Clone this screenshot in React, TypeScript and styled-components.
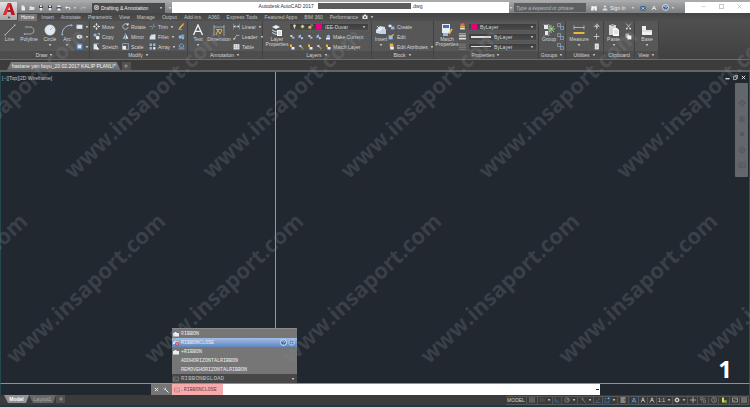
import React from "react";
import styled, { createGlobalStyle } from "styled-components";

const GlobalStyle = createGlobalStyle`
  *, *::before, *::after { box-sizing: border-box; }
  html, body { margin: 0; height: 100%; background: #212830; }
  #root { height: 100%; }
  button, input, select { font: inherit; color: inherit; margin: 0; padding: 0; border: 0; background: none; }
  select { appearance: none; }
`;

/* ---------- icons ---------- */

const W = "#e9eef4";
const B = "#8fb8ea";
const Y = "#e8b83a";
const P = "#e5007d";
const line = (d: string, c = W, w = 1.2) => <path d={d} fill="none" stroke={c} strokeWidth={w} />;
const fill = (d: string, c = W) => <path d={d} fill={c} />;

const drawings: Record<string, React.ReactNode> = {
  file: <>{fill("M3 1h5l2 2v8H3z")}{line("M8 1v3h3", "#888", 0.7)}</>,
  open: <>{fill("M1 3h4l1 1h4v2H1z")}{fill("M0 10l2-5h10l-2 5z", "#d8dde2")}</>,
  save: <>{fill("M2 1h8v10H2z", "#40454b")}{fill("M4 1h4v3H4zM3 6h6v5H3z")}</>,
  print: <>{fill("M3 1h6v3H3z")}{fill("M1 4h10v5H1z", "#565b61")}{fill("M3 7h6v4H3z")}</>,
  undo: <>{line("M3 5h5c3 0 3 4 0 4", W, 1.8)}{fill("M0 5l4-3v6z")}</>,
  redo: <>{line("M9 5H4c-3 0-3 4 0 4", "#b5b9bd", 1.5)}{fill("M12 5L8 2v6z", "#b5b9bd")}</>,
  cube: <>{line("M2 2h8v8H2z", "#fff", 2)}{fill("M5 5h2v2H5z", "#fff")}</>,
  binoculars: <>{fill("M1 2h4v9H0zM7 2h4l1 9H7zM4 4h4v3H4z", "#f5f5f5")}</>,
  person: <><circle cx="6" cy="3" r="2" fill="#eee" />{fill("M1 11c0-6 10-6 10 0z", "#ddd")}</>,
  exchange: <>{fill("M1 2h10v9H1z", "#31598f")}{line("M3 4l6 5M9 4L3 9", "#fff", 1.4)}</>,
  a360: <>{line("M2 10l4-8 4 8M4 7h4", "#e8f0fa", 1.6)}</>,
  help: <><circle cx="6" cy="6" r="5" fill="#33639c" stroke="#fff" strokeWidth="1.4" />{line("M4 5c0-3 4-2 4 0L6 7M6 8v1.4", "#fff", 1.1)}</>,
  line: <>{line("M1 11L11 1", "#d6dde6", 0.7)}<circle cx="1.2" cy="10.8" r=".9" fill={B} /><circle cx="10.8" cy="1.2" r=".9" fill={B} /></>,
  polyline: <>{line("M1 10h6c5 0 5-6 1-7H2", "#b9cde8", 0.7)}<circle cx="1.5" cy="10" r=".8" fill={B} /></>,
  circle: <><circle cx="6" cy="6" r="5.3" fill="#e2e8ef" stroke="#a7b3c2" strokeWidth=".5" />{line("M6 6l3-3", "#6f8fb8", 0.5)}</>,
  arc: <>{line("M1 11C1 5 5 1 11 1", "#b9cde8", 0.8)}<circle cx="1.4" cy="10.6" r=".9" fill={B} /><circle cx="10.6" cy="1.4" r=".9" fill={B} /></>,
  rect: <>{fill("M1 3h10v7H1z", "#dfe8f2")}{fill("M1 3h3v2H1z", B)}</>,
  ellipse: <><ellipse cx="6" cy="6.5" rx="5" ry="3.4" fill="#dfe8f2" /><circle cx="6" cy="6.5" r="1.2" fill="#5b7fae" /></>,
  hatch: <>{fill("M1 1h10v10H1z", "#5f8fd0")}{fill("M3 3h6v6H3z", "#dbe8f8")}</>,
  move: <>{line("M6 1v10M1 6h10", W, 1.2)}{fill("M6 0l2 3H4zM6 12l2-3H4zM0 6l3-2v4zM12 6L9 4v4z")}<circle cx="6" cy="6" r="1.4" fill="#505050" /></>,
  copy: <><circle cx="3.5" cy="3.5" r="2.7" fill={B} /><circle cx="8" cy="8" r="3.2" fill={W} />{line("M8 1h3v3", W)}</>,
  stretch: <>{fill("M1 2h6v9H1z", "#dfe6ee")}{fill("M7 6l4 5H6z", "#fff")}{line("M1 1h9", B, 1)}</>,
  rotate: <>{line("M9 2.5A4.6 4.6 0 1 0 10.6 7", "#d9e0e8", 1.2)}{fill("M7 1l5 0-2 4z")}</>,
  mirror: <>{fill("M1 10l4-8v8z", B)}{fill("M11 10L7 2v8z")}{line("M6 0v12", W, 0.6)}</>,
  scale: <>{line("M1 1h10v10H1z", B, 1.2)}{fill("M1 5h6v6H1z")}</>,
  trim: <>{line("M1 6h4M8 6h3", B, 1)}{line("M9 1L5 11", "#a0a8b1", 0.9)}</>,
  fillet: <>{fill("M1 11C1 5 5 2 11 2v9z", "#d7e2ef")}{line("M1 7l4-5", W, 1)}</>,
  array: <>{fill("M1 1h4v4H1zM7 1h4v4H7zM1 7h4v4H1z", B)}{fill("M7 7h4v4H7z")}</>,
  erase: <>{line("M2 10l7-8", Y, 2.4)}{line("M8 3l2-2", "#e87f6b", 2.4)}{line("M1 11h6", W, 0.8)}</>,
  explode: <><circle cx="4" cy="7" r="3" fill={B} /><circle cx="8" cy="5" r="3" fill="#6ca2e2" /><circle cx="8.5" cy="9" r="2" fill={B} /></>,
  offset: <>{line("M1 10h10M2 7c0-7 8-7 8 0z", B, 1.3)}</>,
  text: <>{line("M1.5 11L6 1l4.5 10M3.3 7.4h5.4", "#f0f3f6", 1.3)}</>,
  dimension: <>{line("M1 1v11M11 1v11M1 3h10", "#bcd3ef", 0.6)}{line("M3 11l2-5 2 4 2-4", Y, 1)}{fill("M3 5h6v1H3z", "#c9a95b")}</>,
  linear: <>{line("M1 1v10M11 1v10M1 6h10", B, 0.9)}{fill("M1 6l3-2v4zM11 6L8 4v4z")}</>,
  leader: <>{line("M2 11L6 4h5", "#d6dee8", 1)}{fill("M1 12l0-4 3 2z")}</>,
  table: <>{fill("M1 2h10v9H1z", "#f0f2f4")}{line("M1 5h10M1 8h10M4.5 2v9M8 2v9", "#7a828b", 0.6)}</>,
  layers: <>{fill("M1 3l4-2 4 2-4 2z")}{fill("M1 5.5l4 2 4-2v1l-4 2-4-2zM1 8l4 2 1-.5v1L5 11 1 9z", "#cdd6e0")}{fill("M6 6h5v6H6z", "#f8f8f8")}{line("M7 8h3M7 10h3", "#7b8591", 0.5)}</>,
  bulb: <><circle cx="6" cy="4" r="3" fill="#f6ecb2" />{fill("M4.5 7h3v4h-3z", "#d5d5d5")}</>,
  sun: <><circle cx="6" cy="6" r="3" fill="#f4e9a4" />{line("M6 0v12M0 6h12M2 2l8 8M10 2l-8 8", "#d6cc90", 0.7)}</>,
  lock: <>{fill("M1 5h7v6H1z", "#e7c26b")}{line("M7 5V2h4v3", W, 1)}</>,
  layerA: <>{fill("M1 4l4-2 3 2-3 2z")}{fill("M5 7l4-2 3 3-4 2z", B)}</>,
  layerB: <>{fill("M1 3l5-2v6l-5 1z", B)}{fill("M6 6l5 2-4 3z")}</>,
  layerC: <>{fill("M1 4l4-2 3 2-3 2z")}{line("M6 7c4-1 5 2 3 4", Y, 1.5)}</>,
  layerD: <>{fill("M2 1h4v5H2z", Y)}{fill("M5 6h6v5H5z")}</>,
  layerE: <>{fill("M3 4l4-3 3 3v4H3z", B)}{fill("M2 8h8v3H2z")}</>,
  insert: <>{fill("M1 6l4-4 5 1v5l-4 2-5-1z", "#d6dde6")}{fill("M5 5h6v5H5z", "#bcd2ee")}{line("M2 2l4 4M6 3v3H3", "#fff", 0.8)}</>,
  create: <>{fill("M1 3h5v4H1z")}{fill("M5 6h6v5H5z", B)}</>,
  edit: <>{fill("M1 4h7v7H1z", B)}{line("M4 8l6-6", Y, 1.8)}</>,
  attributes: <>{fill("M3 1h6v5H3z", Y)}{fill("M3 6h7v5H4z")}</>,
  match: <>{fill("M1 0h8v9H1z", "#e9edf2")}{fill("M2 1h6v3H2z", "#3e73b9")}{fill("M2 9h5v3H2z", B)}{line("M8 10l3-5", Y, 1.6)}</>,
  wheel: <><ellipse cx="6" cy="3" rx="4" ry="2.4" fill="#d66" />{fill("M2 5h8v2H2z", Y)}{fill("M2 8h8v3H2z", W)}</>,
  weights: <>{fill("M0 1h12v1H0zM0 4h12v2H0zM0 8h12v3H0z", "#e2e2e2")}</>,
  linetypes: <>{line("M0 2h12M0 5h12M0 8h12M0 11h12", "#aaa", 0.7)}</>,
  group: <>{fill("M1 1h4v4H1zM2 7h3v4H2z", "#e3e9f0")}{line("M8 1v8M5 5h7M6 2l5 6M11 2L6 8", "#9fe08c", 0.8)}{line("M0 0h6v12H0", "#cfd8e3", 0.5)}</>,
  ungroup: <>{line("M1 1h5v5H1zM6 6h5v5H6z", "#9fc0e6", 1)}</>,
  measure: <>{line("M1 3.5h10M1 1.5v4M11 1.5v4", "#dce6f1", 0.6)}{fill("M.5 8h11v2H.5z", Y)}</>,
  quick: <>{line("M6 1v10M1 6h10M3 3l6 6", W, 0.9)}{fill("M7 1l4 4-2 1-3-3z", "#d8b35f")}</>,
  point: <>{line("M6 1v10M1 6h10", W, 1.1)}</>,
  calc: <>{fill("M3 1h7v10H3z", "#e9ebee")}{line("M4 4h5M4 7h5M6 4v6", "#909aa5", 0.6)}</>,
  paste: <>{fill("M1 1h7v10H1z", "#cfd4d9")}{fill("M3 0h3v2H3z", "#8f979f")}{fill("M5 4h4l2 2v6H5z", "#fafafa")}{line("M6 7h4M6 9h4", "#8c949c", 0.5)}</>,
  cut: <>{line("M2 1l6 7M10 1L4 8", W, 1)}<circle cx="3" cy="9.5" r="1.5" fill={W} /><circle cx="9" cy="9.5" r="1.5" fill={W} /></>,
  pages: <>{fill("M1 1h6v7H1z", "#b9c0c8")}{fill("M4 4h7v7H4z", "#f3f5f7")}</>,
  base: <>{fill("M1 2h4v4h6v5H1z", "#eef1f4")}{line("M1 7h10", "#aab2ba", 0.5)}</>,
  camera: <>{fill("M1 3h10v7H1zM4 1h4v2H4z", "#e5e5e5")}<circle cx="6" cy="6.5" r="2" fill="#555" /></>,
  wrench: <>{line("M4 4l7 7", "#eee", 2)}{line("M1 3l2 2 2-2-1-2", "#eee", 1.6)}</>,
  cross: <>{line("M2 2l8 8M10 2l-8 8", "#fff", 2)}</>,
  prompt: <>{line("M1 2h10v8H1zM3 4l2 2-2 2M6 8h3", "#b56a70", 1)}</>,
  history: <>{line("M1 2h10v8H1zM3 4l2 2-2 2M6 8h3", "#9a9a9a", 1)}</>,
  folder: <>{fill("M0 4h3V2h4v2h5v7H0z", "#eceff2")}</>,
  closeRibbon: <>{fill("M0 3h3V1h4v2h4v5H0z", "#f3f3f3")}<circle cx="8" cy="8" r="4" fill="#d1404b" />{line("M6 8h4", "#fff", 1.4)}</>,
  globe: <><circle cx="6" cy="6" r="4.6" fill="#4c78b2" stroke="#e5edf7" strokeWidth="1.2" />{line("M2 6h8M6 2v8", "#cfe0f4", 0.8)}</>,
  grid: <>{line("M1 1v10M4.3 1v10M7.6 1v10M11 1v10M1 2h10M1 6h10M1 10h10", "#9c9c9c", 0.8)}</>,
  dots: <>{line("M2 2v8M6 2v8M10 2v8", "#777", 1)}</>,
  ortho: <>{line("M2 1v9h9M2 6h4v4", "#3477bd", 1.2)}</>,
  polar: <><circle cx="6" cy="6" r="4.5" fill="none" stroke="#b4b4b4" />{line("M6 6h5M6 6l3-4", "#b4b4b4", 0.9)}</>,
  iso: <>{line("M1 1l10 10M6 6V1", "#a5a5a5", 1)}</>,
  track: <>{line("M1 11L10 2M1 11h10", "#3483cf", 1.2)}</>,
  snap: <>{line("M2 3h8v8H2z", "#3483cf", 1.2)}{fill("M8 1h3v3H8z", "#5eaaf0")}</>,
  lwt: <>{fill("M1 1h10v2H1zM1 5h7v2H1zM1 9h10v2H1zM9 5h2v2H9z", "#d0d0d0")}</>,
  annoBlue: <>{line("M2 11l4-9 4 9M3 7l6 3M4 3h4", "#3f92e0", 2)}</>,
  anno: <>{line("M2 11l4-9 4 9M4 7h4M6 1v4", "#d0d0d0", 1.4)}</>,
  gear: <><circle cx="6" cy="6" r="3" fill="none" stroke="#ddd" strokeWidth="2" />{line("M6 0v3M6 9v3M0 6h3M9 6h3M2 2l2 2M8 8l2 2M10 2L8 4M4 8l-2 2", "#ddd", 1.3)}</>,
  plus: <>{line("M6 0v12M0 6h12", "#ddd", 1.2)}</>,
  quickProps: <>{line("M1 1h5v4H1zM7 3h4M7 6h4v5H6zM3 5v4", "#aaa", 0.9)}</>,
  isolate: <><circle cx="6" cy="6" r="5" fill="none" stroke="#bbb" />{line("M6 3v3l2 3", "#bbb", 1)}</>,
  hardware: <>{fill("M2 1h4v6h5v4H2z", "#d9d94a")}{fill("M6 7h5v4H6z", "#59b15a")}</>,
  clean: <>{line("M1 2h10v8H1zM3 8l2-2M9 4L7 6", "#ccc", 1.2)}</>,
  menu: <>{line("M0 2h12M0 6h12M0 10h12", "#ddd", 1.2)}</>,
  restore: <>{line("M4 1h7v7H9M1 4h7v7H1z", "#e6e6e6", 1.6)}</>,
  minimise: <>{line("M1 9h10", "#fff", 2.6)}</>,
  winMin: <>{line("M1 6h10", "#aaa", 1.2)}</>,
  winMax: <>{line("M1 1h10v10H1z", "#999", 1.4)}</>,
  winClose: <>{line("M1 1l10 10M11 1L1 11", "#999", 1.2)}</>,
  caret: <>{fill("M2 4h8L6 9z", "#e2e2e2")}</>,
  orbit: <><circle cx="6" cy="6" r="4" fill="none" stroke="#4f5359" />{line("M6 0v12M0 6h12", "#4f5359", 0.8)}</>,
  pan: <>{line("M3 11V5M5 10V2M7 10V2M9 11V4M2 11h8", "#4f5359", 1)}</>,
  zoomTool: <>{line("M2 2l8 8M10 2l-8 8", "#4f5359", 1)}<circle cx="6" cy="6" r="2.5" fill="none" stroke="#4f5359" /></>,
  motion: <>{line("M1 3h10v7H1zM4 5l4 2-4 2z", "#4f5359", 0.9)}</>,
};

const Glyph = styled.svg<{ $size: number }>`
  display: block;
  flex: none;
  width: ${(p) => p.$size}px;
  height: ${(p) => p.$size}px;
`;

const Icon = ({ name, size = 6 }: { name: string; size?: number }) => (
  <Glyph $size={size} viewBox="0 0 12 12" aria-hidden="true">
    {drawings[name]}
  </Glyph>
);
const Caret = () => <Icon name="caret" size={4} />;

/* ---------- frame ---------- */

const Shell = styled.div`
  position: relative;
  display: flex;
  flex-direction: column;
  min-height: 100%;
  overflow: hidden;
  border-bottom: 2px solid #1d3a42;
  background: #3a3a3a;
  color: #d6d6d6;
  font: 5px/6px "Liberation Sans", Arial, sans-serif;
`;

const Header = styled.header`
  position: relative;
  background: #484848;
`;

const TitleBar = styled.div`
  display: flex;
  height: 13px;
  border-top: 2px solid #a9abab;
  padding-left: 17px;
  background: #fff;
`;

const LogoButton = styled.button`
  position: absolute;
  left: 0;
  top: 2px;
  display: flex;
  flex-direction: column;
  align-items: center;
  width: 17px;
  height: 18px;
  background: linear-gradient(#e3e3e3, #a5a5a5);
`;

const QuickBar = styled.div`
  display: flex;
  align-items: center;
  gap: 3px;
  width: 155px;
  padding-left: 3px;
  background: linear-gradient(#a2a4a6, #7c7e80);
`;

const ToolButton = styled.button`
  display: flex;
  align-items: center;
  gap: 2px;
`;

const WorkspaceBox = styled.label`
  display: flex;
  align-items: center;
  gap: 2px;
  width: 73px;
  height: 10px;
  margin-left: auto;
  padding: 0 2px;
  background: #4a4b4d;
  color: #eee;
`;

const Pick = styled.select`
  flex: 1;
  min-width: 0;
  height: 6px;
  line-height: 6px;
  outline: none;
`;

const WindowTitle = styled.div`
  display: flex;
  flex: 1;
  align-items: flex-start;
  justify-content: center;
  gap: 4px;
  padding-top: 1px;
  color: #333;
`;

const HiddenName = styled.span`
  width: 93px;
  height: 6px;
  margin-right: -3px;
  background: #5c5c5e;
`;

const InfoBar = styled.div`
  display: flex;
  align-items: center;
  gap: 5px;
  width: 176px;
  background: linear-gradient(#a2a4a6, #7c7e80);
  color: #f4f4f4;
`;

const SearchBox = styled.input`
  width: 72px;
  height: 9px;
  margin-left: -4px;
  padding: 0 2px;
  background: #5d5e60;
  &::placeholder { color: #bcbcbc; font-style: italic; opacity: 1; }
`;

const WindowButtons = styled.div`
  display: flex;
  align-items: center;
  justify-content: space-around;
  width: 65px;
  padding: 0 2px 2px 10px;
`;

const TabRow = styled.nav`
  display: flex;
  align-items: center;
  gap: 1px;
  height: 8px;
  padding-left: 18px;
  background: linear-gradient(#444, #505050);
`;

const RibbonTab = styled.button<{ $active?: boolean }>`
  height: 7px;
  padding: 0 3px;
  border-radius: 1px 1px 0 0;
  line-height: 7px;
  color: ${(p) => (p.$active ? "#fff" : "#c4c4c4")};
  background: ${(p) => (p.$active ? "#747474" : "none")};
`;

/* ---------- ribbon ---------- */

const Ribbon = styled.div`
  display: flex;
  height: 39px;
  border-bottom: 1px solid #6c6c6c;
  background: linear-gradient(#4f4f4f, #404040);
`;

const PanelBox = styled.section<{ $width: number }>`
  display: flex;
  flex-direction: column;
  flex: none;
  width: ${(p) => p.$width}px;
  border-right: 1px solid #424242;
  background: #575757;
`;

const PanelBody = styled.div<{ $gap?: number }>`
  display: flex;
  flex: 1;
  gap: ${(p) => p.$gap ?? 4}px;
  padding: 1px 2px 0 3px;
`;

const PanelTitle = styled.h2`
  display: flex;
  align-items: center;
  justify-content: center;
  gap: 2px;
  height: 8px;
  margin: 0;
  font-size: 5px;
  font-weight: 400;
  line-height: 7px;
  white-space: nowrap;
  background: #4d4d4d;
`;

const BigButton = styled.button<{ $width: number }>`
  display: flex;
  flex: none;
  flex-direction: column;
  align-items: center;
  gap: 1px;
  width: ${(p) => p.$width}px;
  padding-top: 2px;
  line-height: 5px;
  white-space: nowrap;
`;

const Column = styled.div<{ $width?: number }>`
  display: flex;
  flex: none;
  flex-direction: column;
  gap: 1px;
  width: ${(p) => (p.$width ? `${p.$width}px` : "auto")};
`;

const SmallButton = styled.button`
  display: flex;
  align-items: center;
  gap: 2px;
  height: 9px;
  white-space: nowrap;
`;

const IconRow = styled.div`
  display: flex;
  align-items: center;
  gap: 3px;
  height: 9px;
`;

const ComboBox = styled.label`
  display: flex;
  align-items: center;
  gap: 3px;
  width: 100%;
  height: 8px;
  padding: 0 2px;
  border: 1px solid #5b5b5b;
  background: linear-gradient(#3d3d3d, #4b4b4b);
`;

const ComboSlot = styled.div`
  display: flex;
  align-items: center;
  height: 9px;
`;

const Swatch = styled.span`
  flex: none;
  width: 6px;
  height: 6px;
  background: ${P};
`;

const Stroke = styled.span<{ $thick: number }>`
  flex: none;
  width: 20px;
  height: ${(p) => p.$thick}px;
  background: #dcdcdc;
`;

const Panel = ({ title, width, gap, menu = true, children }: {
  title: string; width: number; gap?: number; menu?: boolean; children: React.ReactNode;
}) => (
  <PanelBox $width={width}>
    <PanelBody $gap={gap}>{children}</PanelBody>
    <PanelTitle>{title}{menu && <Caret />}</PanelTitle>
  </PanelBox>
);

const Big = ({ icon, label, width, size = 12, caret }: {
  icon: string; label: React.ReactNode; width: number; size?: number; caret?: boolean;
}) => (
  <BigButton $width={width}>
    <Icon name={icon} size={size} />
    <span>{label}</span>
    {caret && <Caret />}
  </BigButton>
);

const Small = ({ icon, label, caret }: { icon: string; label?: string; caret?: boolean }) => (
  <SmallButton aria-label={label ?? icon}>
    <Icon name={icon} size={7} />
    {label}
    {caret && <Caret />}
  </SmallButton>
);

/* ---------- drawing area ---------- */

const FileTabs = styled.div`
  display: flex;
  align-items: flex-end;
  gap: 1px;
  height: 12px;
  padding-left: 7px;
  border-bottom: 2px solid #636465;
  background: #3d3c3c;
`;

const FileTab = styled.button`
  padding: 0 5px;
  height: 8px;
  text-align: left;
  white-space: nowrap;
  color: #f2f2f2;
  background: linear-gradient(#868686, #686868);
  clip-path: polygon(4px 0, calc(100% - 4px) 0, 100% 100%, 0 100%);
`;

const AddTab = styled.button`
  display: flex;
  align-items: center;
  justify-content: center;
  width: 9px;
  height: 8px;
  background: #525252;
`;

const Canvas = styled.main`
  position: relative;
  flex: 1;
  min-height: 240px;
  border-left: 1px solid #24484e;
  border-right: 1px solid #0e625c;
  border-bottom: 1px solid #8d9094;
  background: #212830;
`;

const ViewLabel = styled.div`
  padding: 3px 1px;
  color: #c3c7ca;
`;

const Crosshair = styled.div`
  position: absolute;
  top: 0;
  bottom: 0;
  left: 274px;
  width: 1px;
  background: #92999f;
`;

const ViewControls = styled.div`
  position: absolute;
  top: 3px;
  right: 3px;
  display: flex;
  gap: 3px;
`;

const NavBar = styled.div`
  position: absolute;
  top: 11px;
  right: 1px;
  display: flex;
  flex-direction: column;
  align-items: center;
  justify-content: space-around;
  width: 13px;
  height: 94px;
  padding: 12px 0 4px;
  border-radius: 1px;
  background: #63676c;
`;

const StepNumber = styled.div`
  position: absolute;
  right: 17px;
  bottom: 0;
  color: #fff;
  font: 700 24px/28px "Open Sans", sans-serif;
`;

const Suggestions = styled.div`
  position: absolute;
  left: 171px;
  bottom: 0;
  width: 125px;
  border-top: 1px solid #8b8b8b;
  background: #767676;
  color: #ececec;
  font-family: "Liberation Mono", monospace;
`;

const SuggestionList = styled.ul`
  margin: 0;
  padding: 0;
  list-style: none;
`;

const Suggestion = styled.li<{ $active?: boolean }>`
  display: grid;
  grid-template-columns: 7px 1fr auto auto;
  align-items: center;
  gap: 1px;
  height: 9px;
  padding: 0 2px 0 1px;
  background: ${(p) => (p.$active ? "linear-gradient(#a3bfe6, #5f86bf)" : "none")};
`;

const LastUsed = styled.div`
  display: flex;
  align-items: center;
  gap: 2px;
  height: 9px;
  padding: 0 2px 0 1px;
  background: #474747;
  color: #bdbdbd;
  font-size: 6px;
  & > span { flex: 1; }
`;

/* ---------- bottom bars ---------- */

const CommandRow = styled.div`
  display: flex;
  height: 11px;
  padding-left: 150px;
  border-left: 1px solid #24484e;
  border-right: 1px solid #0e625c;
  background: #212830;
`;

const CommandTools = styled.div`
  display: flex;
  align-items: center;
  justify-content: space-evenly;
  width: 21px;
  background: #757575;
`;

const CommandLine = styled.label`
  display: flex;
  align-items: center;
  width: 428px;
  padding-right: 1px;
  background: #fff;
`;

const CommandField = styled.div`
  display: flex;
  align-items: center;
  gap: 1px;
  width: 51px;
  height: 100%;
  padding-left: 2px;
  background: #f5abab;
  color: #7f3a40;
`;

const CommandInput = styled.input`
  flex: 1;
  min-width: 0;
  outline: none;
  font-family: "Liberation Mono", monospace;
`;

const CommandMenu = styled.button`
  width: 3px;
  height: 1px;
  margin-left: auto;
  background: #222;
`;

const StatusBar = styled.footer`
  display: flex;
  justify-content: space-between;
  height: 10px;
  background: #3b3b3b;
`;

const LayoutTabs = styled.div`
  display: flex;
  padding-left: 4px;
`;

const LayoutTab = styled.button<{ $width: number; $active?: boolean }>`
  width: ${(p) => p.$width}px;
  height: 8px;
  font-weight: ${(p) => (p.$active ? 700 : 400)};
  color: ${(p) => (p.$active ? "#fff" : "#aaa")};
  background: ${(p) => (p.$active ? "#939393" : "#686868")};
  clip-path: polygon(0 0, 100% 0, calc(100% - 3px) 100%, 4px 100%);
`;

const StatusTools = styled.div`
  display: flex;
  align-items: center;
  padding-right: 1px;
`;

const StatusButton = styled.button<{ $width: number }>`
  display: flex;
  align-items: center;
  justify-content: center;
  gap: 2px;
  width: ${(p) => p.$width}px;
  height: 9px;
  border: 0 solid #575757;
  border-width: 1px 1px 1px 0;
`;

/* ---------- watermark ---------- */

const Watermark = styled.div`
  position: absolute;
  inset: 0;
  overflow: hidden;
  pointer-events: none;
  user-select: none;
  color: rgba(136, 136, 140, 0.26);
  font: 700 22px/24px "Open Sans", sans-serif;
`;

const MarkRow = styled.div<{ $left: number; $top: number }>`
  position: absolute;
  left: ${(p) => p.$left}px;
  top: ${(p) => p.$top}px;
  display: flex;
`;

const Mark = styled.span`
  flex: none;
  width: 138px;
  height: 24px;
  white-space: nowrap;
  transform: rotate(-43deg);
  transform-origin: 0 100%;
`;

const tabs = ["Home", "Insert", "Annotate", "Parametric", "View", "Manage", "Output", "Add-ins", "A360", "Express Tools", "Featured Apps", "BIM 360", "Performance"];

const suggestions = [
  { name: "RIBBON", icon: "folder" },
  { name: "RIBBONCLOSE", icon: "closeRibbon", active: true },
  { name: "+RIBBON", icon: "folder" },
  { name: "ADDHORIZONTALRIBBON" },
  { name: "REMOVEHORIZONTALRIBBON" },
];

const statusItems: { icon: string; width: number; caret?: boolean }[] = [
  { icon: "grid", width: 11 },
  { icon: "dots", width: 15, caret: true },
  { icon: "ortho", width: 9 },
  { icon: "polar", width: 16, caret: true },
  { icon: "iso", width: 16, caret: true },
  { icon: "track", width: 9 },
  { icon: "snap", width: 15, caret: true },
  { icon: "lwt", width: 11 },
  { icon: "annoBlue", width: 10 },
  { icon: "anno", width: 9 },
  { icon: "anno", width: 9 },
];

const statusEnd: { icon: string; width: number; caret?: boolean }[] = [
  { icon: "gear", width: 15, caret: true },
  { icon: "plus", width: 10 },
  { icon: "quickProps", width: 11 },
  { icon: "isolate", width: 10 },
  { icon: "hardware", width: 11 },
  { icon: "clean", width: 10 },
  { icon: "menu", width: 9 },
];

const StatusGroup = ({ items }: { items: typeof statusItems }) => (
  <>
    {items.map((item, i) => (
      <StatusButton key={i} $width={item.width} aria-label={item.icon}>
        <Icon name={item.icon} size={6} />
        {item.caret && <Caret />}
      </StatusButton>
    ))}
  </>
);

const upperMarks = [0, 1, 2, 3, 4, 5];
const lowerMarks = [0, 1, 2, 3, 4, 5, 6];

export default function App() {
  return (
    <>
      <GlobalStyle />
      <Shell>
        <Header>
          <TitleBar>
            <QuickBar>
              {["file", "open", "save", "save", "print"].map((n, i) => (
                <ToolButton key={i} aria-label={n}><Icon name={n} size={6} /></ToolButton>
              ))}
              <ToolButton aria-label="undo"><Icon name="undo" /><Caret /></ToolButton>
              <ToolButton aria-label="redo"><Icon name="redo" /></ToolButton>
              <WorkspaceBox>
                <Icon name="cube" size={5} />
                <Pick aria-label="Workspace"><option>Drafting &amp; Annotation</option></Pick>
                <Caret />
              </WorkspaceBox>
              <ToolButton aria-label="Customize"><Caret /></ToolButton>
            </QuickBar>
            <WindowTitle>
              <span>Autodesk AutoCAD 2017</span>
              <HiddenName />
              <span>.dwg</span>
            </WindowTitle>
            <InfoBar>
              <ToolButton aria-label="Collapse"><Caret /></ToolButton>
              <SearchBox aria-label="Search" placeholder="Type a keyword or phrase" />
              <ToolButton aria-label="Find"><Icon name="binoculars" /></ToolButton>
              <ToolButton><Icon name="person" />Sign In</ToolButton>
              <ToolButton aria-label="Account"><Caret /></ToolButton>
              <ToolButton aria-label="Exchange"><Icon name="exchange" /></ToolButton>
              <ToolButton aria-label="Apps"><Icon name="a360" /></ToolButton>
              <ToolButton aria-label="Help"><Icon name="help" size={7} /><Caret /></ToolButton>
            </InfoBar>
            <WindowButtons>
              <ToolButton aria-label="Minimize"><Icon name="winMin" size={5} /></ToolButton>
              <ToolButton aria-label="Maximize"><Icon name="winMax" size={5} /></ToolButton>
              <ToolButton aria-label="Close"><Icon name="winClose" size={5} /></ToolButton>
            </WindowButtons>
          </TitleBar>
          <TabRow>
            {tabs.map((t, i) => <RibbonTab key={t} $active={i === 0}>{t}</RibbonTab>)}
            <ToolButton aria-label="Ribbon display"><Icon name="camera" /><Caret /></ToolButton>
          </TabRow>
          <LogoButton aria-label="Application menu">
            <Glyph $size={14} viewBox="0 0 14 14" aria-hidden="true">
              <path d="M1 13L6 1h3l4 12h-3.5L8.600 10H5l-1 3z" fill="#b3161f" />
              <path d="M6 1h3l-5 12H1z" fill="#de2f35" />
              <path d="M6 8l1.300-3.500L8.200 8z" fill="#e5d5d5" />
            </Glyph>
            <Glyph $size={4} viewBox="0 0 12 12" aria-hidden="true"><path d="M2 2h8L6 8z" fill="#333" /></Glyph>
          </LogoButton>
        </Header>

        <Ribbon>
          <Panel title="Draw" width={90} gap={2}>
            <Big icon="line" label="Line" width={13} />
            <Big icon="polyline" label="Polyline" width={22} />
            <Big icon="circle" label="Circle" width={16} caret />
            <Big icon="arc" label="Arc" width={14} caret />
            <Column>
              <Small icon="rect" caret />
              <Small icon="ellipse" caret />
              <Small icon="hatch" caret />
            </Column>
          </Panel>
          <Panel title="Modify" width={98} gap={1}>
            <Column $width={28}>
              <Small icon="move" label="Move" />
              <Small icon="copy" label="Copy" />
              <Small icon="stretch" label="Stretch" />
            </Column>
            <Column $width={26}>
              <Small icon="rotate" label="Rotate" />
              <Small icon="mirror" label="Mirror" />
              <Small icon="scale" label="Scale" />
            </Column>
            <Column $width={28}>
              <Small icon="trim" label="Trim" caret />
              <Small icon="fillet" label="Fillet" caret />
              <Small icon="array" label="Array" caret />
            </Column>
            <Column>
              <Small icon="erase" />
              <Small icon="explode" />
              <Small icon="offset" />
            </Column>
          </Panel>
          <Panel title="Annotation" width={75} gap={2}>
            <Big icon="text" label="Text" width={14} caret />
            <Big icon="dimension" label="Dimension" width={24} />
            <Column>
              <Small icon="linear" label="Linear" caret />
              <Small icon="leader" label="Leader" caret />
              <Small icon="table" label="Table" />
            </Column>
          </Panel>
          <Panel title="Layers" width={109} gap={1}>
            <Big icon="layers" label={<>Layer<br />Properties</>} width={22} />
            <Column $width={80}>
              <ComboSlot>
                <ComboBox>
                  <Icon name="bulb" size={5} />
                  <Icon name="sun" size={5} />
                  <Icon name="lock" size={5} />
                  <Swatch />
                  <Pick aria-label="Layer"><option>IEE-Duvar</option></Pick>
                  <Caret />
                </ComboBox>
              </ComboSlot>
              <IconRow>
                {["layerA", "layerB", "layerA", "layerB"].map((n, i) => (
                  <ToolButton key={i} aria-label={n}><Icon name={n} /></ToolButton>
                ))}
                <SmallButton><Icon name="layerE" />Make Current</SmallButton>
              </IconRow>
              <IconRow>
                {["layerD", "layerC", "layerD", "layerC"].map((n, i) => (
                  <ToolButton key={i} aria-label={n}><Icon name={n} /></ToolButton>
                ))}
                <SmallButton><Icon name="layerD" />Match Layer</SmallButton>
              </IconRow>
            </Column>
          </Panel>
          <Panel title="Block" width={62} gap={1}>
            <Big icon="insert" label="Insert" width={12} caret />
            <Column>
              <Small icon="create" label="Create" />
              <Small icon="edit" label="Edit" />
              <Small icon="attributes" label="Edit Attributes" caret />
            </Column>
          </Panel>
          <Panel title="Properties" width={105} gap={2}>
            <Big icon="match" label={<>Match<br />Properties</>} width={20} />
            <Column>
              <Small icon="wheel" />
              <Small icon="weights" />
              <Small icon="linetypes" />
            </Column>
            <Column $width={69}>
              <ComboSlot>
                <ComboBox><Swatch /><Pick aria-label="Object color"><option>ByLayer</option></Pick><Caret /></ComboBox>
              </ComboSlot>
              <ComboSlot>
                <ComboBox><Stroke $thick={2} /><Pick aria-label="Lineweight"><option>ByLayer</option></Pick><Caret /></ComboBox>
              </ComboSlot>
              <ComboSlot>
                <ComboBox><Stroke $thick={1} /><Pick aria-label="Linetype"><option>ByLayer</option></Pick><Caret /></ComboBox>
              </ComboSlot>
            </Column>
          </Panel>
          <Panel title="Groups" width={27} gap={1}>
            <Big icon="group" label="Group" width={14} />
            <Column>
              <Small icon="ungroup" />
              <Small icon="ungroup" />
              <Small icon="ungroup" />
            </Column>
          </Panel>
          <Panel title="Utilities" width={38}>
            <Big icon="measure" label="Measure" width={20} caret />
            <Column>
              <Small icon="quick" />
              <Small icon="point" />
              <Small icon="calc" />
            </Column>
          </Panel>
          <Panel title="Clipboard" width={31} gap={5} menu={false}>
            <Big icon="paste" label="Paste" width={13} caret />
            <Column>
              <Small icon="cut" />
              <Small icon="pages" />
            </Column>
          </Panel>
          <Panel title="View" width={24}>
            <Big icon="base" label="Base" width={18} caret />
          </Panel>
        </Ribbon>

        <FileTabs>
          <FileTab>hastane yarı boyu_20.02.2017 KALIP PLANLI*</FileTab>
          <AddTab aria-label="New drawing"><Icon name="plus" size={4} /></AddTab>
        </FileTabs>

        <Canvas>
          <ViewLabel>[−][Top][2D Wireframe]</ViewLabel>
          <Crosshair />
          <ViewControls>
            <ToolButton aria-label="Minimize drawing"><Icon name="minimise" size={5} /></ToolButton>
            <ToolButton aria-label="Restore drawing"><Icon name="restore" size={5} /></ToolButton>
            <ToolButton aria-label="Close drawing"><Icon name="cross" size={5} /></ToolButton>
          </ViewControls>
          <NavBar>
            {["orbit", "pan", "zoomTool", "orbit", "motion"].map((n, i) => (
              <ToolButton key={i} aria-label={n}><Icon name={n} size={8} /></ToolButton>
            ))}
          </NavBar>
          <StepNumber>1</StepNumber>
          <Suggestions>
            <SuggestionList>
              {suggestions.map((s) => (
                <Suggestion key={s.name} $active={s.active}>
                  {s.icon ? <Icon name={s.icon} /> : <span />}
                  <span>{s.name}</span>
                  {s.active && <Icon name="help" size={7} />}
                  {s.active && <Icon name="globe" size={7} />}
                </Suggestion>
              ))}
            </SuggestionList>
            <LastUsed><Icon name="history" /><span>RIBBONBGLOAD</span><Caret /></LastUsed>
          </Suggestions>
        </Canvas>

        <CommandRow>
          <CommandTools>
            <ToolButton aria-label="Close command line"><Icon name="cross" size={5} /></ToolButton>
            <ToolButton aria-label="Customize command line"><Icon name="wrench" size={6} /></ToolButton>
          </CommandTools>
          <CommandLine>
            <CommandField>
              <Icon name="prompt" />
              <span>-</span>
              <CommandInput aria-label="Command" defaultValue="RIBBONCLOSE" />
            </CommandField>
            <CommandMenu aria-label="Recent commands" />
          </CommandLine>
        </CommandRow>

        <StatusBar>
          <LayoutTabs>
            <LayoutTab $width={25} $active>Model</LayoutTab>
            <LayoutTab $width={27}>Layout1</LayoutTab>
            <AddTab aria-label="New layout"><Icon name="plus" size={4} /></AddTab>
          </LayoutTabs>
          <StatusTools>
            <StatusButton $width={21}>MODEL</StatusButton>
            <StatusGroup items={statusItems} />
            <StatusButton $width={16}>1:1<Caret /></StatusButton>
            <StatusGroup items={statusEnd} />
          </StatusTools>
        </StatusBar>

        <Watermark aria-hidden="true">
          <MarkRow $left={-63} $top={158}>
            {upperMarks.map((i) => <Mark key={i}>www.insaport.com</Mark>)}
          </MarkRow>
          <MarkRow $left={-121} $top={343}>
            {lowerMarks.map((i) => <Mark key={i}>www.insaport.com</Mark>)}
          </MarkRow>
        </Watermark>
      </Shell>
    </>
  );
}
